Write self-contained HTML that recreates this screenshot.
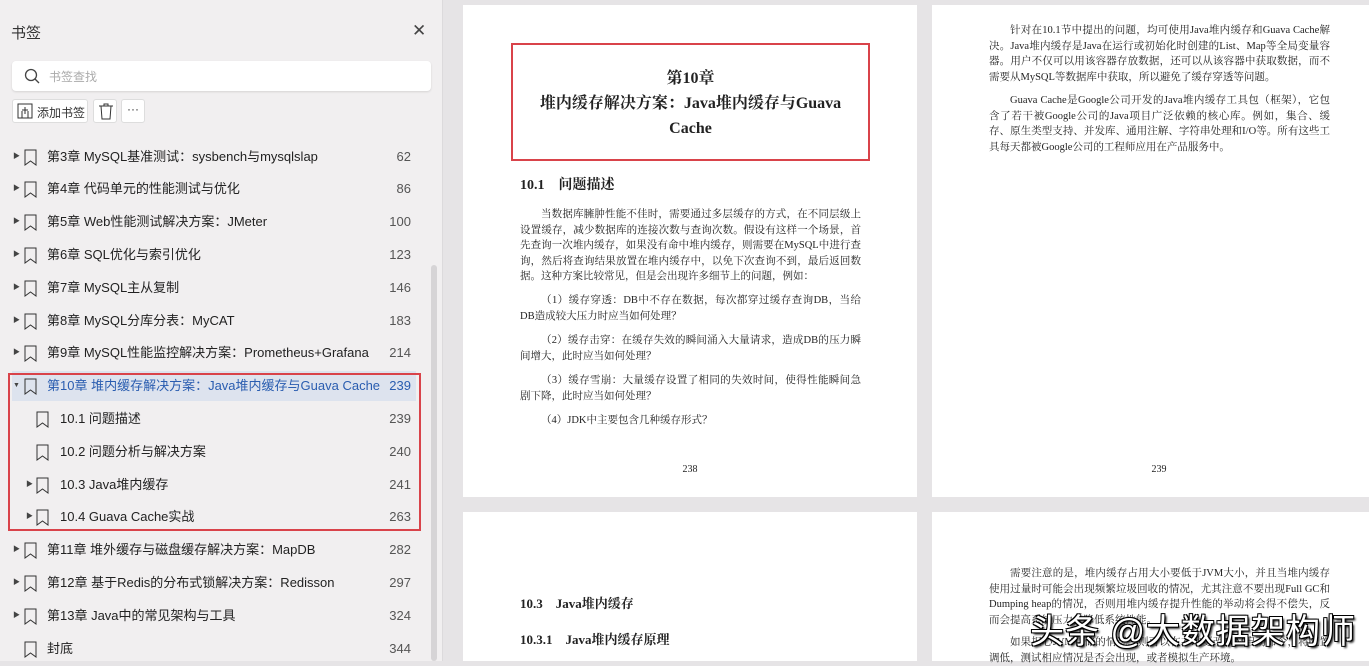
<!DOCTYPE html>
<html><head><meta charset="utf-8">
<style>
*{margin:0;padding:0;box-sizing:border-box}
body{width:1369px;height:661px;overflow:hidden;background:#e6e4e6;font-family:"Liberation Sans","Noto Sans CJK SC",sans-serif;position:relative}
.side{position:absolute;left:0;top:0;width:443px;height:661px;background:#f1eff0;border-right:1px solid #dcdadc}
.ab{position:absolute}
.row{position:absolute;left:0;width:430px;height:32px;font-size:13px;color:#222;line-height:32px}
.row .tx{position:absolute;left:47px}
.row .pg{position:absolute;right:19px;color:#555}
.row .ar{position:absolute;left:13px;font-size:7px;color:#444}
.bm{position:absolute;top:8px;width:13px;height:17px}
.sub .tx{left:60px}
.page{position:absolute;background:#fff}
.serif{font-family:"Liberation Serif","Noto Serif CJK SC",serif;color:#222}
.p{font-size:10.5px;line-height:15.5px;text-align:justify;position:absolute}
</style></head><body>
<div class="side">
  <div class="ab" style="left:11px;top:22px;font-size:15px;color:#333">书签</div>
  <div class="ab" style="left:412px;top:21px;font-size:17px;color:#444">✕</div>
  <div class="ab" style="left:12px;top:61px;width:419px;height:30px;background:#fff;border-radius:4px;box-shadow:0 1px 2px rgba(0,0,0,.12)">
    <svg class="ab" style="left:12px;top:7px" width="16" height="16"><circle cx="7" cy="7" r="5.5" fill="none" stroke="#444" stroke-width="1.3"/><line x1="11" y1="11" x2="15" y2="15" stroke="#444" stroke-width="1.3"/></svg>
    <div class="ab" style="left:37px;top:7px;font-size:12px;color:#aaa">书签查找</div>
  </div>
  <div class="ab" style="left:12px;top:99px;width:76px;height:24px;background:#fff;border:1px solid #ddd;border-radius:3px">
    <svg class="ab" style="left:4px;top:3px" width="16" height="16"><rect x="1" y="1" width="14" height="14" fill="none" stroke="#333"/><path d="M5 15V8M11 15V8M8 4v7M5 7h6" stroke="#333" fill="none"/></svg>
    <div class="ab" style="left:24px;top:4px;font-size:12px;color:#333">添加书签</div>
  </div>
  <div class="ab" style="left:93px;top:99px;width:24px;height:24px;background:#fff;border:1px solid #ddd;border-radius:3px">
    <svg class="ab" style="left:4px;top:3px" width="16" height="17"><path d="M1 3h14M6 3V1h4v2M3 3l1 13h8l1-13" stroke="#333" fill="none"/></svg>
  </div>
  <div class="ab" style="left:121px;top:99px;width:24px;height:24px;background:#fff;border:1px solid #ddd;border-radius:3px;font-size:12px;text-align:center;line-height:18px;color:#333">···</div>
  <div class="ab" style="left:431px;top:265px;width:6px;height:396px;background:#d6d4d6;border-radius:3px"></div>
  <div class="ab" style="left:12px;top:371px;width:404px;height:30px;background:#dde3ee"></div>
  <div class="ab" style="left:8px;top:373px;width:413px;height:158px;border:2px solid #d9434a"></div>
</div>

<div class="row" style="top:141px"><span class="ar">▶</span><svg class="bm" style="left:24px"><path d="M1 1h11v15l-5.5-4L1 16z" fill="none" stroke="#333"/></svg><span class="tx">第3章 MySQL基准测试：sysbench与mysqlslap</span><span class="pg">62</span></div>
<div class="row" style="top:173px"><span class="ar">▶</span><svg class="bm" style="left:24px"><path d="M1 1h11v15l-5.5-4L1 16z" fill="none" stroke="#333"/></svg><span class="tx">第4章 代码单元的性能测试与优化</span><span class="pg">86</span></div>
<div class="row" style="top:206px"><span class="ar">▶</span><svg class="bm" style="left:24px"><path d="M1 1h11v15l-5.5-4L1 16z" fill="none" stroke="#333"/></svg><span class="tx">第5章 Web性能测试解决方案：JMeter</span><span class="pg">100</span></div>
<div class="row" style="top:239px"><span class="ar">▶</span><svg class="bm" style="left:24px"><path d="M1 1h11v15l-5.5-4L1 16z" fill="none" stroke="#333"/></svg><span class="tx">第6章 SQL优化与索引优化</span><span class="pg">123</span></div>
<div class="row" style="top:272px"><span class="ar">▶</span><svg class="bm" style="left:24px"><path d="M1 1h11v15l-5.5-4L1 16z" fill="none" stroke="#333"/></svg><span class="tx">第7章 MySQL主从复制</span><span class="pg">146</span></div>
<div class="row" style="top:305px"><span class="ar">▶</span><svg class="bm" style="left:24px"><path d="M1 1h11v15l-5.5-4L1 16z" fill="none" stroke="#333"/></svg><span class="tx">第8章 MySQL分库分表：MyCAT</span><span class="pg">183</span></div>
<div class="row" style="top:337px"><span class="ar">▶</span><svg class="bm" style="left:24px"><path d="M1 1h11v15l-5.5-4L1 16z" fill="none" stroke="#333"/></svg><span class="tx">第9章 MySQL性能监控解决方案：Prometheus+Grafana</span><span class="pg">214</span></div>
<div class="row" style="top:370px;color:#2a5db0"><span class="ar">▼</span><svg class="bm" style="left:24px"><path d="M1 1h11v15l-5.5-4L1 16z" fill="none" stroke="#333"/></svg><span class="tx">第10章 堆内缓存解决方案：Java堆内缓存与Guava Cache</span><span class="pg" style="color:#2a5db0">239</span></div>
<div class="row sub" style="top:403px"><svg class="bm" style="left:36px"><path d="M1 1h11v15l-5.5-4L1 16z" fill="none" stroke="#333"/></svg><span class="tx">10.1 问题描述</span><span class="pg">239</span></div>
<div class="row sub" style="top:436px"><svg class="bm" style="left:36px"><path d="M1 1h11v15l-5.5-4L1 16z" fill="none" stroke="#333"/></svg><span class="tx">10.2 问题分析与解决方案</span><span class="pg">240</span></div>
<div class="row sub" style="top:469px"><span class="ar" style="left:26px">▶</span><svg class="bm" style="left:36px"><path d="M1 1h11v15l-5.5-4L1 16z" fill="none" stroke="#333"/></svg><span class="tx">10.3 Java堆内缓存</span><span class="pg">241</span></div>
<div class="row sub" style="top:501px"><span class="ar" style="left:26px">▶</span><svg class="bm" style="left:36px"><path d="M1 1h11v15l-5.5-4L1 16z" fill="none" stroke="#333"/></svg><span class="tx">10.4 Guava Cache实战</span><span class="pg">263</span></div>
<div class="row" style="top:534px"><span class="ar">▶</span><svg class="bm" style="left:24px"><path d="M1 1h11v15l-5.5-4L1 16z" fill="none" stroke="#333"/></svg><span class="tx">第11章 堆外缓存与磁盘缓存解决方案：MapDB</span><span class="pg">282</span></div>
<div class="row" style="top:567px"><span class="ar">▶</span><svg class="bm" style="left:24px"><path d="M1 1h11v15l-5.5-4L1 16z" fill="none" stroke="#333"/></svg><span class="tx">第12章 基于Redis的分布式锁解决方案：Redisson</span><span class="pg">297</span></div>
<div class="row" style="top:600px"><span class="ar">▶</span><svg class="bm" style="left:24px"><path d="M1 1h11v15l-5.5-4L1 16z" fill="none" stroke="#333"/></svg><span class="tx">第13章 Java中的常见架构与工具</span><span class="pg">324</span></div>
<div class="row" style="top:633px"><svg class="bm" style="left:24px"><path d="M1 1h11v15l-5.5-4L1 16z" fill="none" stroke="#333"/></svg><span class="tx">封底</span><span class="pg">344</span></div>

<div class="page serif" style="left:463px;top:5px;width:454px;height:492px">
  <div class="ab" style="left:48px;top:38px;width:359px;height:118px;border:2px solid #d9434a;text-align:center;font-size:16px;line-height:25px;padding-top:21px;font-weight:bold">第10章<br>堆内缓存解决方案：Java堆内缓存与Guava<br>Cache</div>
  <div class="ab" style="left:57px;top:169px;font-size:14px;font-weight:bold">10.1　问题描述</div>
  <div class="p" style="left:57px;top:202px;width:341px;text-indent:21px">当数据库臃肿性能不佳时，需要通过多层缓存的方式，在不同层级上设置缓存，减少数据库的连接次数与查询次数。假设有这样一个场景，首先查询一次堆内缓存，如果没有命中堆内缓存，则需要在MySQL中进行查询，然后将查询结果放置在堆内缓存中，以免下次查询不到，最后返回数据。这种方案比较常见，但是会出现许多细节上的问题，例如：</div>
  <div class="p" style="left:57px;top:288px;width:341px;text-indent:21px">（1）缓存穿透：DB中不存在数据，每次都穿过缓存查询DB，当给DB造成较大压力时应当如何处理？</div>
  <div class="p" style="left:57px;top:328px;width:341px;text-indent:21px">（2）缓存击穿：在缓存失效的瞬间涌入大量请求，造成DB的压力瞬间增大，此时应当如何处理？</div>
  <div class="p" style="left:57px;top:368px;width:341px;text-indent:21px">（3）缓存雪崩：大量缓存设置了相同的失效时间，使得性能瞬间急剧下降，此时应当如何处理？</div>
  <div class="p" style="left:57px;top:408px;width:341px;text-indent:21px">（4）JDK中主要包含几种缓存形式？</div>
  <div class="ab" style="left:0;width:454px;top:459px;text-align:center;font-size:10px">238</div>
</div>
<div class="page serif" style="left:932px;top:5px;width:437px;height:492px">
  <div class="p" style="left:57px;top:18px;width:341px;text-indent:21px">针对在10.1节中提出的问题，均可使用Java堆内缓存和Guava Cache解决。Java堆内缓存是Java在运行或初始化时创建的List、Map等全局变量容器。用户不仅可以用该容器存放数据，还可以从该容器中获取数据，而不需要从MySQL等数据库中获取，所以避免了缓存穿透等问题。</div>
  <div class="p" style="left:57px;top:88px;width:341px;text-indent:21px">Guava Cache是Google公司开发的Java堆内缓存工具包（框架），它包含了若干被Google公司的Java项目广泛依赖的核心库。例如，集合、缓存、原生类型支持、并发库、通用注解、字符串处理和I/O等。所有这些工具每天都被Google公司的工程师应用在产品服务中。</div>
  <div class="ab" style="left:0;width:454px;top:459px;text-align:center;font-size:10px">239</div>
</div>
<div class="page serif" style="left:463px;top:512px;width:454px;height:149px">
  <div class="ab" style="left:57px;top:81px;font-size:13px;font-weight:bold">10.3　Java堆内缓存</div>
  <div class="ab" style="left:57px;top:117px;font-size:13px;font-weight:bold">10.3.1　Java堆内缓存原理</div>
</div>
<div class="page serif" style="left:932px;top:512px;width:437px;height:149px">
  <div class="p" style="left:57px;top:54px;width:341px;text-indent:21px">需要注意的是，堆内缓存占用大小要低于JVM大小，并且当堆内缓存使用过量时可能会出现频繁垃圾回收的情况，尤其注意不要出现Full GC和Dumping heap的情况，否则用堆内缓存提升性能的举动将会得不偿失，反而会提高系统压力，降低系统性能。</div>
  <div class="p" style="left:57px;top:123px;width:341px;text-indent:21px">如果担心JVM存储的情况，则可以在本地更改JVM启动命令，将配置调低，测试相应情况是否会出现，或者模拟生产环境。</div>
</div>
<div class="ab" style="left:1030px;top:604px;font-size:34px;color:#fff;letter-spacing:1px;text-shadow:1px 1px 0 #000,-1px -1px 0 #000,1px -1px 0 #000,-1px 1px 0 #000,2px 2px 2px #000;font-family:'Liberation Sans','Noto Sans CJK SC',sans-serif">头条 @大数据架构师</div>
</body></html>
